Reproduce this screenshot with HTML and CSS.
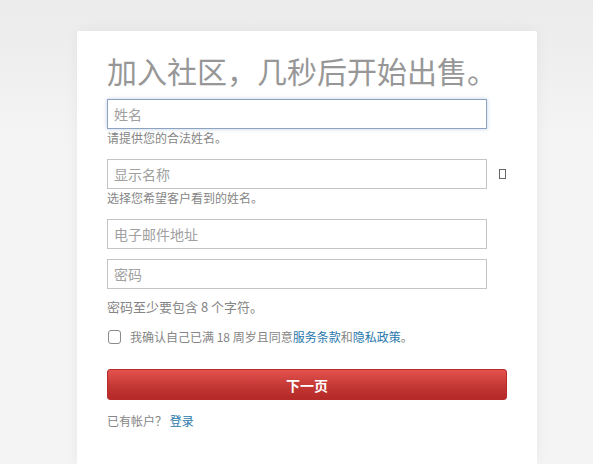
FILE: index.html
```html
<!DOCTYPE html>
<html lang="zh-CN">
<head>
    <meta charset="UTF-8">
    <meta name="viewport" content="width=device-width, initial-scale=1.0">
    <title>加入社区</title>
    <link rel="stylesheet" href="styles.css">
</head>
<body>
    <div class="page">
        <div class="signup-card">
            <h1 class="title">加入社区，几秒后开始出售。</h1>
            <form class="signup-form">
                <div class="field">
                    <input type="text" class="text-input is-focused" placeholder="姓名">
                    <p class="hint">请提供您的合法姓名。</p>
                </div>
                <div class="field">
                    <div class="input-row">
                        <input type="text" class="text-input" placeholder="显示名称">
                        <span class="info-mark"></span>
                    </div>
                    <p class="hint">选择您希望客户看到的姓名。</p>
                </div>
                <div class="field field-tight">
                    <input type="email" class="text-input" placeholder="电子邮件地址">
                </div>
                <div class="field">
                    <input type="password" class="text-input" placeholder="密码">
                    <p class="hint hint-password">密码至少要包含 8 个字符。</p>
                </div>
                <label class="agree">
                    <input type="checkbox" class="agree-box">
                    <span>我确认自己已满 18 周岁且同意<a href="#">服务条款</a>和<a href="#">隐私政策</a>。</span>
                </label>
                <button type="button" class="next-btn">下一页</button>
                <p class="login-line">已有帐户？ <a href="#">登录</a></p>
            </form>
        </div>
    </div>
</body>
</html>
```

FILE: styles.css
```css
* {
    margin: 0;
    padding: 0;
    box-sizing: border-box;
}

html, body {
    height: 100%;
    overflow: hidden;
}

body {
    font-family: "Noto Sans CJK SC", "Liberation Sans", sans-serif;
    background: linear-gradient(#ebebeb, #f4f4f4 140px);
}

.page {
    height: 100%;
    padding: 31px 0 0 77px;
}

.signup-card {
    width: 460px;
    height: 100%;
    background-color: #fff;
    padding: 19px 30px 0 30px;
    border-radius: 2px 2px 0 0;
    box-shadow: 0 0 14px rgba(0, 0, 0, 0.05);
}

.title {
    font-size: 30px;
    line-height: 40px;
    font-weight: 400;
    color: #979797;
    margin-bottom: 9px;
    white-space: nowrap;
}

.field {
    margin-bottom: 12px;
}

.field-tight {
    margin-bottom: 10px;
}

.input-row {
    display: flex;
    align-items: center;
}

.text-input {
    display: block;
    width: 380px;
    height: 30px;
    padding: 0 6px;
    border: 1px solid #c4c4c4;
    font-family: inherit;
    font-size: 14px;
    color: #333;
    outline: none;
}

.text-input::placeholder {
    color: #a0a0a0;
}

.text-input.is-focused {
    border-color: #8da3c0;
    box-shadow: 0 0 4px rgba(110, 150, 200, 0.45);
}

.info-mark {
    width: 7px;
    height: 10px;
    border: 1px solid #666;
    margin-left: 12px;
}

.hint {
    font-size: 12px;
    line-height: 18px;
    color: #858585;
}

.hint-password {
    font-size: 13px;
    margin-top: 9px;
}

.agree {
    display: flex;
    align-items: center;
    font-size: 12px;
    line-height: 18px;
    color: #858585;
    margin-top: 1px;
}

.agree-box {
    appearance: none;
    width: 13px;
    height: 14px;
    border: 1px solid #8a8a8a;
    border-radius: 3px;
    margin: 0 9px 0 1px;
}

.agree a, .login-line a {
    color: #2a78ac;
    text-decoration: none;
}

.next-btn {
    display: block;
    width: 400px;
    height: 31px;
    margin-top: 23px;
    border: 1px solid #b62c2a;
    border-radius: 3px;
    background: linear-gradient(#e4534e, #c13532 60%, #b52a28);
    color: #fff;
    font-family: inherit;
    font-size: 14px;
    font-weight: 700;
}

.login-line {
    margin-top: 12px;
    font-size: 12px;
    line-height: 18px;
    color: #858585;
}
```
